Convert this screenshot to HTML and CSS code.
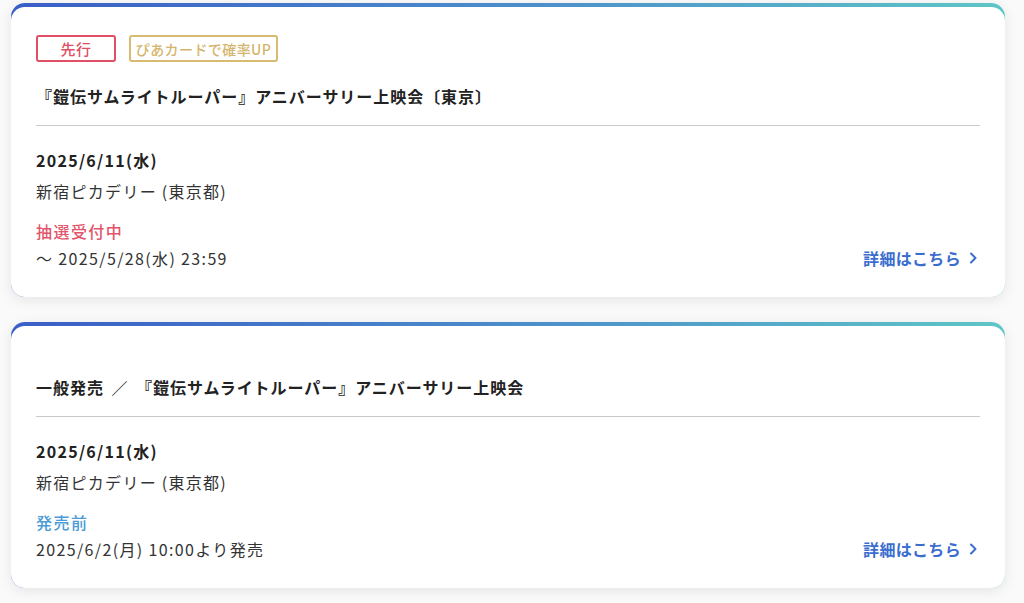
FILE: index.html
```html
<!DOCTYPE html>
<html lang="ja">
<head>
<meta charset="utf-8">
<link rel="stylesheet" href="styles.css">
</head>
<body>
<div class="list">
  <div class="card">
    <div class="card-inner">
      <div class="badges">
        <span class="badge badge-red">先行</span>
        <span class="badge badge-gold">ぴあカードで確率UP</span>
      </div>
      <h2 class="title">『鎧伝サムライトルーパー』アニバーサリー上映会〔東京〕</h2>
      <div class="date">2025/6/11(水)</div>
      <div class="venue">新宿ピカデリー (東京都)</div>
      <div class="status status-red">抽選受付中</div>
      <div class="foot">
        <span class="period">～ 2025/5/28(水) 23:59</span>
        <a class="more" href="#">詳細はこちら<svg class="chev" width="9" height="12" viewBox="0 0 9 12"><path d="M2 1.5 L6.5 6 L2 10.5" fill="none" stroke="currentColor" stroke-width="2" stroke-linecap="round" stroke-linejoin="round"/></svg></a>
      </div>
    </div>
  </div>
  <div class="card">
    <div class="card-inner">
      <h2 class="title">一般発売 <span class="sep">／</span> 『鎧伝サムライトルーパー』アニバーサリー上映会</h2>
      <div class="date">2025/6/11(水)</div>
      <div class="venue">新宿ピカデリー (東京都)</div>
      <div class="status status-blue">発売前</div>
      <div class="foot">
        <span class="period">2025/6/2(月) 10:00より発売</span>
        <a class="more" href="#">詳細はこちら<svg class="chev" width="9" height="12" viewBox="0 0 9 12"><path d="M2 1.5 L6.5 6 L2 10.5" fill="none" stroke="currentColor" stroke-width="2" stroke-linecap="round" stroke-linejoin="round"/></svg></a>
      </div>
    </div>
  </div>
</div>
</body>
</html>
```
FILE: styles.css
```css
* { box-sizing: border-box; }
html, body { margin: 0; padding: 0; background: #fafafa; }
body {
  font-family: "Noto Sans CJK JP", "Noto Sans", sans-serif;
  color: #333;
  width: 1024px;
  height: 603px;
  overflow: hidden;
}
.list {
  padding: 3px 19px 0 11px;
  display: flex;
  flex-direction: column;
  gap: 25px;
}
.card {
  background: linear-gradient(90deg, #3a5ec6 0%, #4b8ccb 50%, #5ec6c6 100%);
  border-radius: 14px;
  padding-top: 4px;
  box-shadow: 0 3px 14px rgba(0, 0, 0, 0.09);
}
.card-inner {
  background: #fff;
  border-radius: 14px;
  padding: 28px 25px 27px 25px;
}
.badges {
  display: flex;
  gap: 13px;
  padding-bottom: 1px;
}
.badge {
  display: inline-flex;
  align-items: center;
  justify-content: center;
  height: 27px;
  border: 2px solid;
  border-radius: 3px;
  font-size: 14px;
  font-weight: 500;
  letter-spacing: 0.03em;
}
.badge-red { color: #e14f66; border-color: #e14f66; width: 80px; font-size: 15px; }
.badge-gold { color: #d4b56c; border-color: #d8ba70; width: 149px; }
.title {
  margin: 21px 0 0 0;
  font-size: 16px;
  line-height: 24px;
  font-weight: 700;
  color: #222;
  letter-spacing: 0.06em;
  padding-bottom: 17px;
  border-bottom: 1px solid #c9c9c9;
}
.sep { margin: 0 3px; font-weight: 400; }
.date {
  margin-top: 22px;
  font-size: 16px;
  line-height: 24px;
  font-weight: 700;
  color: #222;
  letter-spacing: 0.08em;
}
.venue {
  margin-top: 7px;
  font-size: 16px;
  line-height: 24px;
  color: #333;
  letter-spacing: 0.08em;
}
.status {
  margin-top: 16px;
  font-size: 16px;
  line-height: 24px;
  font-weight: 500;
  letter-spacing: 0.09em;
}
.status-red { color: #e2546a; }
.status-blue { color: #4a9bd6; }
.foot {
  margin-top: 3px;
  display: flex;
  justify-content: space-between;
  align-items: center;
  line-height: 24px;
}
.period {
  font-size: 16px;
  color: #333;
  letter-spacing: 0.085em;
}
.more {
  display: inline-flex;
  align-items: center;
  gap: 8px;
  font-size: 16px;
  font-weight: 700;
  color: #3b6dcf;
  text-decoration: none;
  letter-spacing: 0.02em;
  padding-right: 2px;
}
.chev { display: block; }
```
